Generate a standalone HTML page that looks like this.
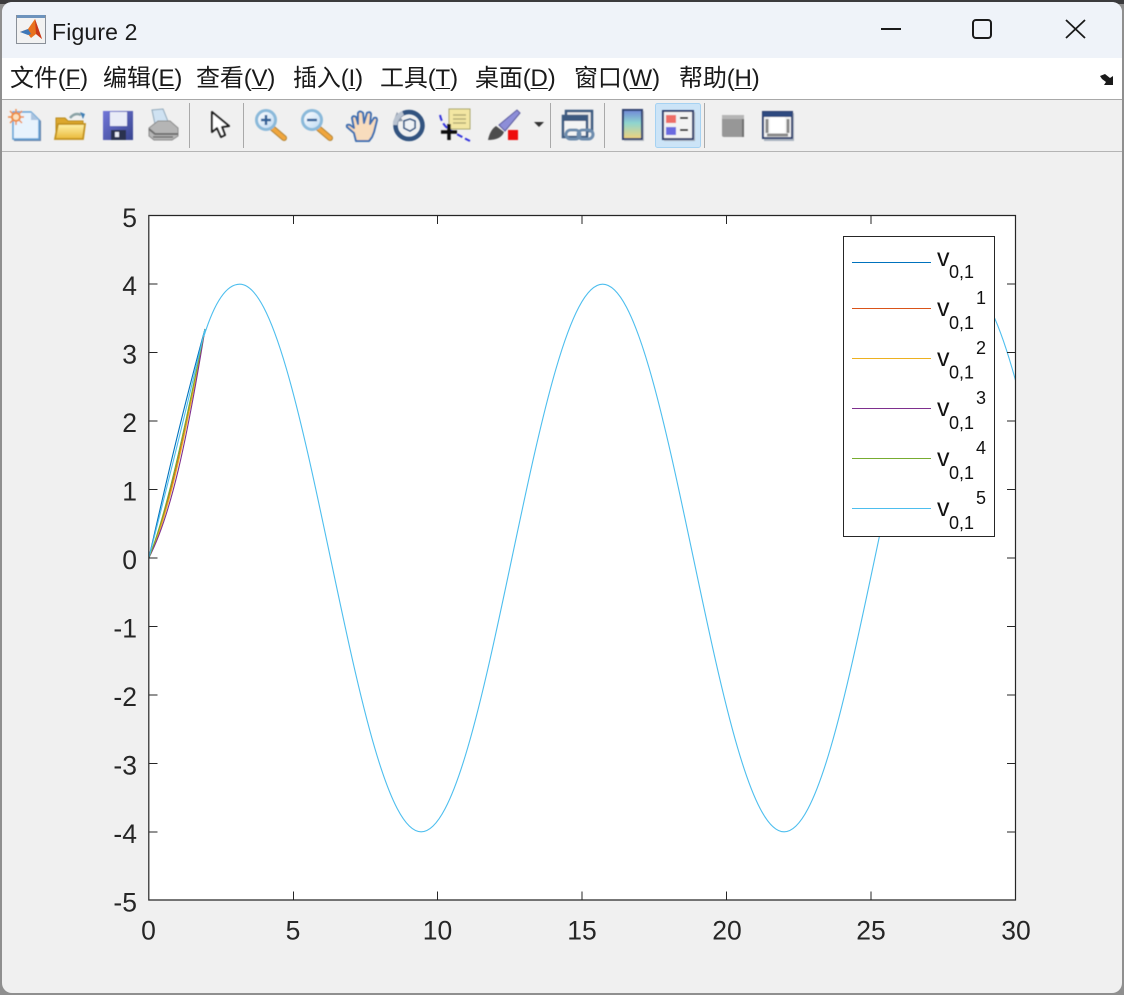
<!DOCTYPE html>
<html><head><meta charset="utf-8"><title>Figure 2</title>
<style>
html,body{margin:0;padding:0;width:1124px;height:995px;overflow:hidden;background:#8f8f8f}
#top{position:absolute;left:0;top:0;width:1124px;height:4px;background:#3b3b3d}
#win{position:absolute;left:2px;top:2px;width:1120px;height:991px;background:#f0f0f0;border-radius:10px;overflow:hidden}
#tb{position:absolute;left:0;top:0;width:1120px;height:56px;background:#eff3f9}
#menu{position:absolute;left:0;top:56px;width:1120px;height:41px;background:#fff;border-bottom:1px solid #a8a8a8}
#tool{position:absolute;left:0;top:98px;width:1120px;height:51px;background:#f0f0f0;border-bottom:1px solid #b4b4b4}
.t{position:absolute;white-space:nowrap;color:#1a1a1a;font-family:"Liberation Sans","Noto Sans CJK SC",sans-serif}
.m{top:64px;font-size:24px;line-height:30px;letter-spacing:-.15px}
.m u{text-decoration-thickness:1px;text-underline-offset:2px}
svg{position:absolute;left:0;top:0;overflow:visible}
text{font-family:"Liberation Sans",sans-serif;fill:#262626}
</style></head><body>
<div id="top"></div>
<div id="win">
<div id="tb"></div><div id="menu"></div><div id="tool"></div>
</div>
<div class="t" style="left:52px;top:18px;font-size:23px;line-height:28px;letter-spacing:.15px">Figure 2</div>
<div class="t m" style="left:10px">文件(<u>F</u>)</div>
<div class="t m" style="left:103px">编辑(<u>E</u>)</div>
<div class="t m" style="left:196px">查看(<u>V</u>)</div>
<div class="t m" style="left:293px">插入(<u>I</u>)</div>
<div class="t m" style="left:380px">工具(<u>T</u>)</div>
<div class="t m" style="left:475px">桌面(<u>D</u>)</div>
<div class="t m" style="left:574px">窗口(<u>W</u>)</div>
<div class="t m" style="left:679px">帮助(<u>H</u>)</div>

<svg width="1124" height="995" viewBox="0 0 1124 995">
<defs><clipPath id="ax"><rect x="149" y="215.5" width="866.5" height="684.5"/></clipPath>
<filter id="soft" x="-5%" y="-5%" width="110%" height="110%"><feGaussianBlur stdDeviation="0.5"/></filter>
<linearGradient id="cb" x1="0" y1="0" x2="0" y2="1"><stop offset="0" stop-color="#6f86d8"/><stop offset=".45" stop-color="#8fd6cf"/><stop offset="1" stop-color="#f3d27a"/></linearGradient>
<linearGradient id="fo" x1="0" y1="0" x2="0" y2="1"><stop offset="0" stop-color="#fff2a8"/><stop offset="1" stop-color="#eab93a"/></linearGradient>
<linearGradient id="gl" x1="0" y1="0" x2="1" y2="1"><stop offset="0" stop-color="#fff"/><stop offset="1" stop-color="#bcd9f2"/></linearGradient>
<linearGradient id="fl" x1="0" y1="0" x2="1" y2="1"><stop offset="0" stop-color="#7276d8"/><stop offset="1" stop-color="#38458f"/></linearGradient></defs>

<!-- title icon -->
<rect x="16.500" y="15.500" width="29" height="28" fill="#f2f2f2" stroke="#8a9099"/>
<rect x="17" y="15" width="28" height="3" fill="#6d93bd"/>
<path d="M20 32l8-3 7-10 7 20-6-5-5 4-4-5z" fill="#e8711d"/>
<path d="M20 32l8-3 3 5-3 1z" fill="#3f78b8"/>
<path d="M35 19l7 20-6-5z" fill="#c9381a"/>

<!-- window buttons -->
<rect x="881" y="28" width="20" height="2" fill="#1a1a1a"/>
<rect x="973" y="20" width="18" height="18" rx="3" fill="none" stroke="#1a1a1a" stroke-width="2"/>
<path d="M1066 20l19 18M1085 20l-19 18" stroke="#1a1a1a" stroke-width="1.800" fill="none"/>
<path d="M1100 76l5-2 5 4 3-2v9h-9l2-3-4-3z" fill="#1a1a1a"/>

<!-- separators -->
<path d="M189.500 103v45M243.500 103v45M550.500 103v45M604.500 103v45M704.500 103v45" stroke="#a9a9a9" stroke-width="1"/>

<g filter="url(#soft)">
<!-- new -->
<path d="M14 113h19l8 8v20H14z" fill="#6a86ad"/>
<path d="M13 112h18l8 8v19H13z" fill="#e8f3fd" stroke="#5ea0d6" stroke-width="1.500"/>
<path d="M31 112v8h8z" fill="#aac4e0"/>
<circle cx="16" cy="117" r="5" fill="#f0903a"/><path d="M16 109v16M8 117h16M10 111l12 12M22 111l-12 12" stroke="#ee8a4b" stroke-width="1.400"/><circle cx="16" cy="117" r="3" fill="#fbe1c0"/>
<!-- open -->
<path d="M56 138v-20h9l3 3h15v17z" fill="#dca72e" stroke="#b98a1b"/>
<path d="M55 139l3-15h27l-2 15z" fill="url(#fo)" stroke="#c2921f" stroke-width="1.800"/>
<path d="M70 118q5-6 11-3" fill="none" stroke="#8aa2a5" stroke-width="2.500"/><path d="M80 112l5 2-2 5z" fill="#3f7fb5"/>
<!-- save -->
<rect x="103" y="111" width="30" height="29" fill="url(#fl)"/>
<rect x="110" y="112" width="17" height="14" fill="#e9ecf7"/>
<rect x="111" y="130" width="15" height="10" fill="#2b3050"/><rect x="115" y="132" width="4" height="5" fill="#e9ecf7"/>
<!-- print -->
<path d="M152 110l11-1 6 15h-14z" fill="#cfe2f2" stroke="#8ea6b8"/>
<path d="M149 128l9-7h12l8 7v8l-6 4h-18l-5-4z" fill="#b5b5b5" stroke="#8a8a8a"/>
<path d="M149 129l6 5h23" fill="none" stroke="#6f6f6f" stroke-width="2"/><path d="M153 137h20" stroke="#6f6f6f" stroke-width="1.500"/>
<!-- arrow -->
<path d="M212 112v20l5-4 4 9 4-2-3-8 7-1z" fill="#fff" stroke="#1a1a1a" stroke-width="2" stroke-linejoin="round"/>
<!-- zoom in -->
<path d="M271 127l13 11" stroke="#b08234" stroke-width="6" stroke-linecap="round"/><path d="M271 127l13 11" stroke="#f0a63e" stroke-width="4" stroke-linecap="round"/>
<circle cx="266" cy="120" r="9.500" fill="url(#gl)" stroke="#8ab9da" stroke-width="3"/><path d="M261 120h10M266 115v10" stroke="#2d5f96" stroke-width="2.400"/>
<!-- zoom out -->
<path d="M317 127l13 11" stroke="#b08234" stroke-width="6" stroke-linecap="round"/><path d="M317 127l13 11" stroke="#f0a63e" stroke-width="4" stroke-linecap="round"/>
<circle cx="312" cy="120" r="9.500" fill="url(#gl)" stroke="#8ab9da" stroke-width="3"/><path d="M307 120h10" stroke="#2d5f96" stroke-width="2.400"/>
<!-- hand -->
<path d="M356 141l-2-8-7-6q-1-3 3-2l4 3-2-10q1-3 4-1l2 7 0-11q2-3 5 0l1 10 3-10q3-2 4 1l-1 10 4-6q3-1 3 2l-3 12-2 5-3 4z" fill="#f8dcbd" stroke="#3f6fb0" stroke-width="2" stroke-linejoin="round"/>
<!-- rotate -->
<circle cx="409" cy="125.500" r="13.500" fill="none" stroke="#33527f" stroke-width="4.500"/>
<path d="M397 112l-4 10 10-1z" fill="#8a96a8"/><path d="M395 125a14 14 0 0 1 8-12" fill="none" stroke="#b9c3d0" stroke-width="4.500"/>
<path d="M404 121l6-2 5 2v7l-5 3-6-3z" fill="#eef2f6" stroke="#33527f" stroke-width="1.500"/>
<!-- data cursor -->
<rect x="449" y="109" width="21" height="20" fill="#f3e6a2" stroke="#a9a56a"/>
<path d="M453 115h13M453 119h13M453 123h13" stroke="#b5ad78" stroke-width="1.500"/>
<path d="M440 115q2 10 10 15t20 11" fill="none" stroke="#3333dd" stroke-width="2" stroke-dasharray="6 3"/>
<path d="M449 124v16M441 132h16" stroke="#111" stroke-width="3.500"/>
<!-- brush -->
<path d="M499 125l18-15 3 3-15 18z" fill="#8d8ed8" stroke="#5a5a9c"/>
<path d="M488 140q2-10 8-14l8 6q-3 8-16 8z" fill="#4d4d4d"/>
<rect x="508" y="130" width="10" height="10" fill="#ee1111"/>
<path d="M534 122h10l-5 5z" fill="#333"/>
<!-- link -->
<rect x="566" y="111" width="26" height="20" fill="#e8e8e8" stroke="#3d5a80" stroke-width="2.500"/>
<rect x="563" y="116" width="24" height="21" fill="#f4f4f4" stroke="#3d5a80" stroke-width="2.500"/>
<rect x="563" y="116" width="24" height="5" fill="#3d5a80"/>
<rect x="566" y="130" width="14" height="9" rx="4.500" fill="none" stroke="#6d8cad" stroke-width="3"/><rect x="578" y="130" width="15" height="9" rx="4.500" fill="none" stroke="#6d8cad" stroke-width="3"/>
<!-- colorbar -->
<rect x="624" y="111" width="20" height="30" fill="#b8bec6"/>
<rect x="623" y="110" width="19" height="29" fill="url(#cb)" stroke="#2e3f6e" stroke-width="2"/>
</g>
<!-- legend button -->
<rect x="655.500" y="103.500" width="45" height="44" rx="2" fill="#cce4f7" stroke="#a6d2f2"/>
<g filter="url(#soft)">
<rect x="664" y="112" width="31" height="29" fill="#a9b3bf"/>
<rect x="663" y="111" width="30" height="28" fill="#f2f2f2" stroke="#2e3f6e" stroke-width="2"/>
<rect x="666" y="115" width="10" height="8" fill="#ee6d66"/><rect x="666" y="127" width="10" height="8" fill="#6b6be0"/>
<path d="M680 118h8M680 130h8" stroke="#222" stroke-width="2"/>
<!-- gray square -->
<rect x="722" y="115" width="22" height="22" rx="2" fill="#979797"/><rect x="722" y="115" width="22" height="4" fill="#b5b5b5"/><rect x="742" y="119" width="2" height="18" fill="#6f6f6f"/>
<!-- plot tools -->
<rect x="764" y="113" width="30" height="28" fill="#a9b3bf"/>
<rect x="763" y="112" width="29" height="26" fill="#f3f3f3" stroke="#2e3f6e" stroke-width="2"/>
<rect x="763" y="112" width="29" height="5" fill="#2e4a80"/><rect x="770" y="117" width="15" height="16" fill="#fff"/>
<path d="M767 119v14M788 119v14M767 135h21" stroke="#8a8a8a" stroke-width="3"/>
</g>

<!-- axes -->
<rect x="149" y="215.500" width="866.500" height="684.500" fill="#fff"/>
<g clip-path="url(#ax)" fill="none" stroke-width="1.100">
<path d="M149 557.500C161 505 180 420 205 329" stroke="#0072BD"/>
<path d="M149 557.500C168 512 185 435 205 329" stroke="#D95319"/>
<path d="M149 557.500C169 514 185 438 205 329" stroke="#EDB120"/>
<path d="M149 557.500C171 515 187 440 205 329" stroke="#7E2F8E"/>
<path d="M149 557.500C167 512 184 432 205 329" stroke="#77AC30"/>
<path d="M149 557.500C165 495 184 420 205 329" stroke="#4DBEEE"/>
<path d="M204 336C214 304 226 284.200 239.730 284.200c32.840 0 61.140 133.530 90.730 273.800c29.590 140.270 57.890 273.800 90.730 273.800c32.840 0 61.140-133.530 90.730-273.800c29.590-140.270 57.890-273.800 90.730-273.800c32.840 0 61.140 133.530 90.730 273.800c29.590 140.270 57.890 273.800 90.730 273.800c32.840 0 61.140-133.530 90.730-273.800c29.590-140.270 57.890-273.800 90.730-273.800c32.840 0 61.140 133.530 90.730 273.800" stroke="#4DBEEE"/>
</g>
<path d="M148.800 215.500h866.700V900H148.800z" fill="none" stroke="#262626" stroke-width="1.200"/>
<path d="M149 284h8.500M149 352.500h8.500M149 421h8.500M149 489.500h8.500M149 558h8.500M149 626.500h8.500M149 695h8.500M149 763.500h8.500M149 832h8.500
M1015.500 284h-8.500M1015.500 352.500h-8.500M1015.500 421h-8.500M1015.500 489.500h-8.500M1015.500 558h-8.500M1015.500 626.500h-8.500M1015.500 695h-8.500M1015.500 763.500h-8.500M1015.500 832h-8.500
M293.500 900v-8.500M437.500 900v-8.500M582 900v-8.500M726.500 900v-8.500M871 900v-8.500
M293.500 215.500v8.500M437.500 215.500v8.500M582 215.500v8.500M726.500 215.500v8.500M871 215.500v8.500" stroke="#262626" stroke-width="1" fill="none"/>

<g font-size="26.500" text-anchor="end">
<text x="137" y="227">5</text><text x="137" y="295">4</text><text x="137" y="363.500">3</text><text x="137" y="432">2</text><text x="137" y="500.500">1</text><text x="137" y="569">0</text><text x="137" y="637.500">-1</text><text x="137" y="706">-2</text><text x="137" y="774.500">-3</text><text x="137" y="843">-4</text><text x="137" y="911.500">-5</text>
</g>
<g font-size="26.500" text-anchor="middle">
<text x="148.500" y="939.500">0</text><text x="293" y="939.500">5</text><text x="437.500" y="939.500">10</text><text x="582" y="939.500">15</text><text x="727" y="939.500">20</text><text x="871" y="939.500">25</text><text x="1016" y="939.500">30</text>
</g>

<!-- legend -->
<rect x="843.500" y="236.500" width="151" height="300" fill="#fff" stroke="#262626" stroke-width="1"/>
<g fill="none" stroke-width="1">
<path d="M852 262.500h79" stroke="#0072BD"/><path d="M852 308.500h79" stroke="#D95319"/><path d="M852 358.500h79" stroke="#EDB120"/><path d="M852 408.500h79" stroke="#7E2F8E"/><path d="M852 458.500h79" stroke="#77AC30"/><path d="M852 508.500h79" stroke="#4DBEEE"/>
</g>
<g font-size="25"><text x="937" y="266" style="fill:#111">v</text><text x="937" y="316" style="fill:#111">v</text><text x="937" y="366" style="fill:#111">v</text><text x="937" y="416" style="fill:#111">v</text><text x="937" y="466" style="fill:#111">v</text><text x="937" y="516" style="fill:#111">v</text></g>
<g font-size="18"><text x="949" y="278" style="fill:#111">0,1</text><text x="949" y="329" style="fill:#111">0,1</text><text x="949" y="378.500" style="fill:#111">0,1</text><text x="949" y="429" style="fill:#111">0,1</text><text x="949" y="479" style="fill:#111">0,1</text><text x="949" y="529" style="fill:#111">0,1</text>
<text x="976" y="304" style="fill:#111">1</text><text x="976" y="354" style="fill:#111">2</text><text x="976" y="404" style="fill:#111">3</text><text x="976" y="454" style="fill:#111">4</text><text x="976" y="504" style="fill:#111">5</text></g>
</svg>
</body></html>
